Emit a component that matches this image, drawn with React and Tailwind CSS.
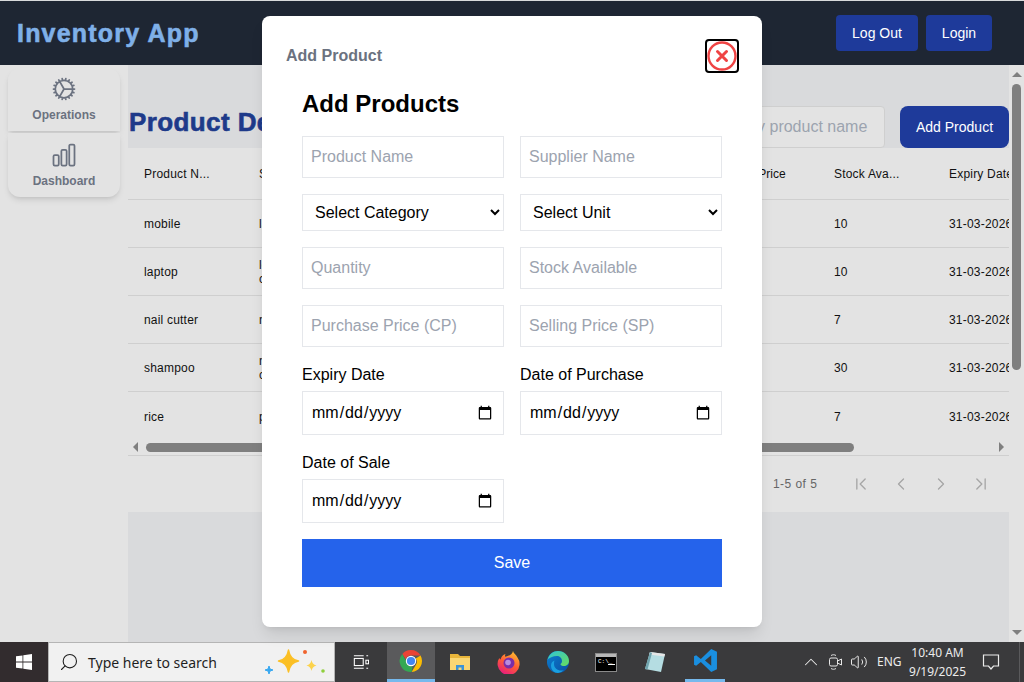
import React from 'react';
import { ChevronFirst, ChevronLast, ChevronLeft, ChevronRight, ChevronUp, Search, Volume2 } from 'lucide-react';
import { HiOutlineCog, HiOutlineChartBar } from 'react-icons/hi2';

const rows = [
  { name: 'mobile', supplier: 'lava', stock: '10', expiry: '31-03-2026' },
  { name: 'laptop', supplier: 'lenovo computers', stock: '10', expiry: '31-03-2026' },
  { name: 'nail cutter', supplier: 'nailco', stock: '7', expiry: '31-03-2026' },
  { name: 'shampoo', supplier: 'nykaa cosmetics', stock: '30', expiry: '31-03-2026' },
  { name: 'rice', supplier: 'patanjali', stock: '7', expiry: '31-03-2026' },
];

const fieldClass = 'w-full h-[42px] border border-[#e5e7eb] bg-white px-2 text-base text-black placeholder:text-[#9ca3af] outline-none';
const selectClass = 'w-full h-[37px] border border-[#e5e7eb] bg-white pl-2 pr-1 text-base text-black outline-none';
const dateClass = 'w-full h-[44px] border border-[#e5e7eb] bg-white px-2 text-base text-black outline-none';

function TriangleArrow({ dir }) {
  const cls = {
    up: 'border-x-[5px] border-x-transparent border-b-[5px] border-b-[#7f7f7f]',
    down: 'border-x-[5px] border-x-transparent border-t-[5px] border-t-[#7f7f7f]',
    left: 'border-y-[5px] border-y-transparent border-r-[5px] border-r-[#7f7f7f]',
    right: 'border-y-[5px] border-y-transparent border-l-[5px] border-l-[#7f7f7f]',
  }[dir];
  return <span className={`block w-0 h-0 ${cls}`} />;
}

function Cell({ w, children }) {
  return <div className={`shrink-0 px-4 leading-[14px] ${w}`}>{children}</div>;
}

function ProductTable() {
  return (
    <div className="bg-[#e3e3e3] h-[364px] flex flex-col text-xs tracking-[0.2px] text-[#111]">
      <div className="overflow-hidden">
        <div className="flex items-center h-[52px] border-b border-[#cfcfcf] w-[1035px]">
          {['Product N...', 'Supplier', 'Category', 'Unit', 'Quantity', 'Selling Price', 'Stock Ava...', 'Expiry Date'].map((h) => (
            <Cell key={h} w="w-[115px]">
              <span className={h === 'Selling Price' ? 'whitespace-nowrap tracking-normal' : 'whitespace-nowrap'}>{h}</span>
            </Cell>
          ))}
        </div>
        {rows.map((r, i) => (
          <div key={r.name} className={`flex items-center w-[1035px] ${i === 4 ? 'h-[47px] pt-[2px]' : 'h-[48px] border-b border-[#cfcfcf]'}`}>
            <Cell w="w-[115px]">{r.name}</Cell>
            <Cell w="w-[115px]">{r.supplier}</Cell>
            <div className="w-[460px] shrink-0" />
            <Cell w="w-[115px]">{r.stock}</Cell>
            <Cell w="w-[115px]"><span className="whitespace-nowrap">{r.expiry}</span></Cell>
          </div>
        ))}
      </div>
      {/* horizontal scrollbar */}
      <div className="h-[17px] flex items-center justify-between px-[5px] border-b border-[#cfcfcf] shrink-0">
        <TriangleArrow dir="left" />
        <div className="flex-1 h-[9px] ml-[8px] mr-[140px]">
          <div className="h-full w-[708px] rounded-full bg-[#7f7f7f]" />
        </div>
        <TriangleArrow dir="right" />
      </div>
      <div className="flex-1 flex items-center text-[#666]">
        <span className="ml-[645px] w-[78px] tracking-[0.45px]">1-5 of 5</span>
        <div className="flex gap-[20px] text-[#a6a6a6]">
          <ChevronFirst size={20} strokeWidth={1.6} />
          <ChevronLeft size={20} strokeWidth={1.6} />
          <ChevronRight size={20} strokeWidth={1.6} />
          <ChevronLast size={20} strokeWidth={1.6} />
        </div>
      </div>
    </div>
  );
}

function AddProductModal() {
  return (
    <div className="absolute left-[262px] top-[16px] w-[500px] h-[611px] bg-white rounded-lg shadow-lg font-['Liberation_Sans',sans-serif]">
      <div className="flex items-center justify-between pl-6 pr-[23px] pt-[22px] h-[57px]">
        <h3 className="text-base font-bold text-[#6b7280]">Add Product</h3>
        <button className="w-[34px] h-[34px] border-2 border-black rounded flex items-center justify-center">
          <svg width="30" height="30" viewBox="0 0 30 30" fill="none">
            <circle cx="15" cy="15" r="13.5" stroke="#ef4444" strokeWidth="2.4" />
            <path d="M10.5 10.5l9 9M19.5 10.5l-9 9" stroke="#ef4444" strokeWidth="3" strokeLinecap="round" />
          </svg>
        </button>
      </div>
      <div className="px-10">
        <h2 className="text-2xl font-bold text-black mt-[16px] leading-[30px]">Add Products</h2>
        <div className="grid grid-cols-2 gap-x-4 mt-[17px]">
          <input className={fieldClass} placeholder="Product Name" />
          <input className={fieldClass} placeholder="Supplier Name" />
          <select className={`${selectClass} mt-4`}><option>Select Category</option></select>
          <select className={`${selectClass} mt-4`}><option>Select Unit</option></select>
          <input className={`${fieldClass} mt-4`} placeholder="Quantity" />
          <input className={`${fieldClass} mt-4`} placeholder="Stock Available" />
          <input className={`${fieldClass} mt-4`} placeholder="Purchase Price (CP)" />
          <input className={`${fieldClass} mt-4`} placeholder="Selling Price (SP)" />
          <div className="mt-4">
            <label className="block text-base text-black leading-[24px] mb-[4px]">Expiry Date</label>
            <input type="date" className={dateClass} />
          </div>
          <div className="mt-4">
            <label className="block text-base text-black leading-[24px] mb-[4px]">Date of Purchase</label>
            <input type="date" className={dateClass} />
          </div>
          <div className="mt-4">
            <label className="block text-base text-black leading-[24px] mb-[4px]">Date of Sale</label>
            <input type="date" className={dateClass} />
          </div>
        </div>
        <button className="w-full h-12 mt-4 bg-[#2563eb] text-white text-base">Save</button>
      </div>
    </div>
  );
}

function ChromeIcon() {
  return (
    <svg width="24" height="24" viewBox="0 0 24 24">
      <path d="M12 1a11 11 0 0 1 9.53 5.5H12a5.5 5.5 0 0 0-5.2 3.7L3.3 4.9A11 11 0 0 1 12 1z" fill="#ea4335" />
      <path d="M21.53 6.5A11 11 0 0 1 12.6 23l4.2-6.9a5.5 5.5 0 0 0-.1-6.6z" fill="#fbbc04" />
      <path d="M12.6 23A11 11 0 0 1 3.3 4.9l4.6 8.6a5 5 0 0 0 5.6 4z" fill="#34a853" />
      <circle cx="12" cy="12" r="5.2" fill="#fff" />
      <circle cx="12" cy="12" r="4.1" fill="#4285f4" />
    </svg>
  );
}

function FolderIcon() {
  return (
    <svg width="24" height="24" viewBox="0 0 24 24">
      <path d="M2 4h8l2 2h10v3H2z" fill="#e8b53a" />
      <path d="M2 8h20v12H2z" fill="#f9d673" />
      <path d="M8 20v-5h8v5h-2.5v-2.5h-3V20z" fill="#3a93d8" />
    </svg>
  );
}

function FirefoxIcon() {
  return (
    <svg width="24" height="24" viewBox="0 0 24 24">
      <defs>
        <linearGradient id="ffx" x1="0.7" y1="0" x2="0.2" y2="1">
          <stop offset="0" stopColor="#ffbd2e" />
          <stop offset="0.5" stopColor="#ff5a36" />
          <stop offset="1" stopColor="#e31587" />
        </linearGradient>
      </defs>
      <path d="M16 1c.6 2.500 3 3.500 4.500 6.500A11 11 0 1 1 2.300 8c.3.800.7 1.300 1.200 1.600C4 7 6 4.500 8.500 4 8 5 7.800 6 8.300 6.800 11 6 15.500 5 16 1z" fill="url(#ffx)" />
      <circle cx="12" cy="13" r="5.500" fill="#7a2ea8" />
      <circle cx="11" cy="12.500" r="2.800" fill="#b98ce0" />
    </svg>
  );
}

function EdgeIcon() {
  return (
    <svg width="24" height="24" viewBox="0 0 24 24">
      <defs>
        <linearGradient id="edg" x1="0" y1="0" x2="1" y2="1">
          <stop offset="0" stopColor="#0c7fd0" />
          <stop offset="1" stopColor="#0a4fa3" />
        </linearGradient>
        <linearGradient id="edg2" x1="0" y1="0" x2="1" y2="1">
          <stop offset="0" stopColor="#2fc4d8" />
          <stop offset="1" stopColor="#68dc5c" />
        </linearGradient>
      </defs>
      <circle cx="12" cy="12" r="11" fill="url(#edg)" />
      <path d="M1.500 10C3 4 7.500 1 12 1c6 0 11 4.500 11 10 0 3.500-2.500 5-5 5-2 0-3.500-.6-3.500-1.500 0-1 1.500-1.200 1.500-3.500 0-3-2.500-5-5-5-4 0-8 2-10 4z" fill="url(#edg2)" />
      <path d="M8 14c0 4 3.500 6.500 7 6.500 1 0 2-.2 3-.6A11 11 0 0 1 12 23C8 23 5 20 5 15.500 5 13 6.500 11 8.500 10.500 8 12 8 13 8 14z" fill="#1aa0e0" />
    </svg>
  );
}

function CmdIcon() {
  return (
    <div className="w-[22px] h-[19px] bg-black border border-[#8a8a8a] relative overflow-hidden">
      <div className="h-[3px] bg-[#b8b8b8]" />
      <span className="absolute left-[2px] top-[4px] text-[6px] leading-[7px] text-white font-['Liberation_Mono',monospace]">C:\_</span>
      <div className="absolute left-[12px] top-[10px] w-[7px] h-px bg-white" />
    </div>
  );
}

function NotepadIcon() {
  return (
    <svg width="24" height="24" viewBox="0 0 24 24">
      <path d="M7 2l15 2-4 18L2 19z" fill="#b5dde2" />
      <path d="M7 2l15 2-.6 2.500L6 4.500z" fill="#e6e6e6" />
      <path d="M7 2L2 19l2.500.4L9 3z" fill="#6fa3ad" />
    </svg>
  );
}

function VsCodeIcon() {
  return (
    <svg width="25" height="25" viewBox="0 0 24 24">
      <path d="M17.500 1L23 3.500v17L17.500 23 7.500 13.500l-4.500 3.500L1 16v-8l2-1 4.500 3.500zM17.500 7l-6 5 6 5z" fill="#1a8fe0" />
    </svg>
  );
}

function MeetIcon() {
  return (
    <svg width="16" height="20" viewBox="0 0 16 20" fill="none" stroke="#e6e6e6" strokeWidth="1">
      <rect x="1.500" y="6" width="8" height="8" rx="1.500" />
      <path d="M9.500 9l4-2v6l-4-2" />
      <path d="M3 3.500c1.500-1 3.500-1 5 0M3 16.500c1.500 1 3.500 1 5 0" />
    </svg>
  );
}

function Taskbar() {
  const apps = [
    { key: 'chrome', icon: <ChromeIcon />, cls: 'w-[48px] bg-[#5a5a5c] border-b-[3px] border-[#76b9ed]' },
    { key: 'folder', icon: <FolderIcon />, cls: 'w-[49px]' },
    { key: 'firefox', icon: <FirefoxIcon />, cls: 'w-[49px]' },
    { key: 'edge', icon: <EdgeIcon />, cls: 'w-[49px]' },
    { key: 'cmd', icon: <CmdIcon />, cls: 'w-[48px]' },
    { key: 'notepad', icon: <NotepadIcon />, cls: 'w-[49px]' },
    { key: 'vscode', icon: <VsCodeIcon />, cls: 'w-[40px] ml-[6px] mr-[3px] border-b-[3px] border-[#76b9ed]' },
  ];
  return (
    <div className="h-[40px] shrink-0 flex bg-[#3a3a3c] text-white font-['Noto_Sans',sans-serif]">
      <div className="w-[48px] bg-[#322c2e] flex items-center justify-center">
        <svg width="16" height="16" viewBox="0 0 16 16" fill="#fff">
          <path d="M0 2.300l6.500-.9v6.200H0zM7.300 1.300L16 0v7.600H7.300zM0 8.400h6.500v6.200L0 13.700zM7.300 8.400H16V16l-8.700-1.200z" />
        </svg>
      </div>
      <div className="w-[287px] bg-[#f1f1f1] border border-[#b5b5b5] flex items-center text-[#1f1f1f]">
        <Search size={20} strokeWidth={1.3} className="ml-[10px] -scale-x-100" />
        <span className="ml-[9px] text-[14px]">Type here to search</span>
        <svg width="64" height="30" viewBox="0 0 64 30" className="ml-auto mr-[7px]">
          <path d="M25.500 3c1 6.500 4 10 10 11-6 1-9 4.500-10 11-1-6.500-4-10-10-11 6-1 9-4.500 10-11z" fill="#fbbf24" stroke="#fbbf24" strokeWidth="1.500" strokeLinejoin="round" />
          <path d="M48.500 13c.5 3 2 4.500 5 5.500-3 1-4.500 2.500-5 5.500-.5-3-2-4.500-5-5.500 3-1 4.500-2.500 5-5.500z" fill="#fcd34d" />
          <path d="M6 19l1 3 3 1-3 1-1 3-1-3-3-1 3-1z" fill="#38a8f0" stroke="#38a8f0" strokeWidth="1" strokeLinejoin="round" />
          <circle cx="42" cy="5" r="2" fill="#f0642e" />
          <circle cx="60" cy="24" r="1.800" fill="#8fcf3c" />
        </svg>
      </div>
      <div className="w-[52px] flex items-center justify-center">
        <svg width="16" height="16" viewBox="0 0 18 16" fill="none" stroke="#fff" strokeWidth="1.200">
          <path d="M1 1h11M1 15h11" />
          <rect x="1.500" y="4" width="10" height="8" />
          <path d="M15 1h2M15 15h2" />
          <rect x="14.500" y="6" width="3" height="4" />
        </svg>
      </div>
      {apps.map((a) => (
        <div key={a.key} className={`flex items-center justify-center h-full ${a.cls}`}>{a.icon}</div>
      ))}
      <div className="flex-1 flex items-center text-[#ececec]">
        <ChevronUp size={22} strokeWidth={1.1} className="ml-[72px]" />
        <span className="ml-[6px]"><MeetIcon /></span>
        <Volume2 size={18} strokeWidth={1.3} className="ml-[6px]" />
        <span className="ml-[9px] text-xs">ENG</span>
        <div className="ml-[9px] w-[54px] text-center text-xs leading-[19px] whitespace-nowrap flex flex-col items-center">
          <span>10:40 AM</span>
          <span>9/19/2025</span>
        </div>
        <svg width="18" height="18" viewBox="0 0 18 18" fill="none" stroke="#ececec" strokeWidth="1.200" className="ml-[17px]">
          <path d="M1.500 2h15v11h-5l-2.500 3-2.500-3h-5z" />
        </svg>
        <div className="ml-[19px] w-px h-full bg-[#5a5a5c]" />
      </div>
    </div>
  );
}

export default function App() {
  return (
    <div className="relative w-[1024px] h-[682px] overflow-hidden flex flex-col font-['Liberation_Sans',sans-serif] bg-[#e3e3e3]">
      <div className="h-px bg-[#d9dadc] shrink-0" />
      {/* Navbar */}
      <header className="h-[64px] shrink-0 bg-[#1e2633] flex items-center justify-between pl-[17px] pr-8">
        <h1 className="text-[25px] font-bold tracking-[1.2px] pt-[2px] text-[#7fb0e8] [-webkit-text-stroke:0.6px_#7fb0e8]">Inventory App</h1>
        <div className="flex gap-2">
          <button className="h-9 w-[82px] rounded bg-[#1e3a9a] text-white text-sm">Log Out</button>
          <button className="h-9 w-[66px] rounded bg-[#1e3a9a] text-white text-sm">Login</button>
        </div>
      </header>

      <div className="flex-1 flex min-h-0">
        {/* Sidebar */}
        <aside className="w-[128px] shrink-0 bg-[#e3e3e3] pt-[3px] pl-2 pr-2">
          <div className="flex flex-col gap-[2px] text-[#6b7280]">
            <button className="h-[63px] rounded-t-xl bg-[#e3e3e3] shadow-md flex flex-col items-center pt-[7px] text-xs font-semibold">
              <HiOutlineCog size={28} />
              <span className="mt-[4px]">Operations</span>
            </button>
            <button className="h-[64px] rounded-b-xl bg-[#e3e3e3] shadow-md flex flex-col items-center pt-[8px] text-xs font-semibold">
              <HiOutlineChartBar size={28} />
              <span className="mt-[4px]">Dashboard</span>
            </button>
          </div>
        </aside>

        {/* Content */}
        <main className="flex-1 min-w-0 bg-[#d9dadc] flex flex-col">
          <div className="h-[83px] flex items-end justify-between shrink-0">
            <h2 className="text-[26px] font-bold tracking-[0.4px] text-[#1e3a8a] [-webkit-text-stroke:0.6px_#1e3a8a] mb-[6px] pl-px whitespace-nowrap">Product Details</h2>
            <div className="flex items-end">
              <input
                className="w-[203px] h-[42px] rounded border border-[#cfcfcf] bg-[#e3e3e3] px-[10px] text-base placeholder:text-[#9ca3af] outline-none"
                placeholder="Search by product name"
              />
              <button className="ml-[15px] w-[109px] h-[42px] rounded-lg bg-[#1e3a9a] text-white text-sm">Add Product</button>
            </div>
          </div>
          <ProductTable />
        </main>

        {/* Page scrollbar */}
        <div className="w-[15px] shrink-0 bg-[#e3e3e3] flex flex-col items-center justify-between py-[7px]">
          <TriangleArrow dir="up" />
          <div className="flex-1 w-full px-[3px] mt-[7px] mb-[7px]">
            <div className="w-full h-[286px] rounded-full bg-[#7f7f7f]" />
          </div>
          <TriangleArrow dir="down" />
        </div>
      </div>

      <Taskbar />
      <AddProductModal />
    </div>
  );
}
